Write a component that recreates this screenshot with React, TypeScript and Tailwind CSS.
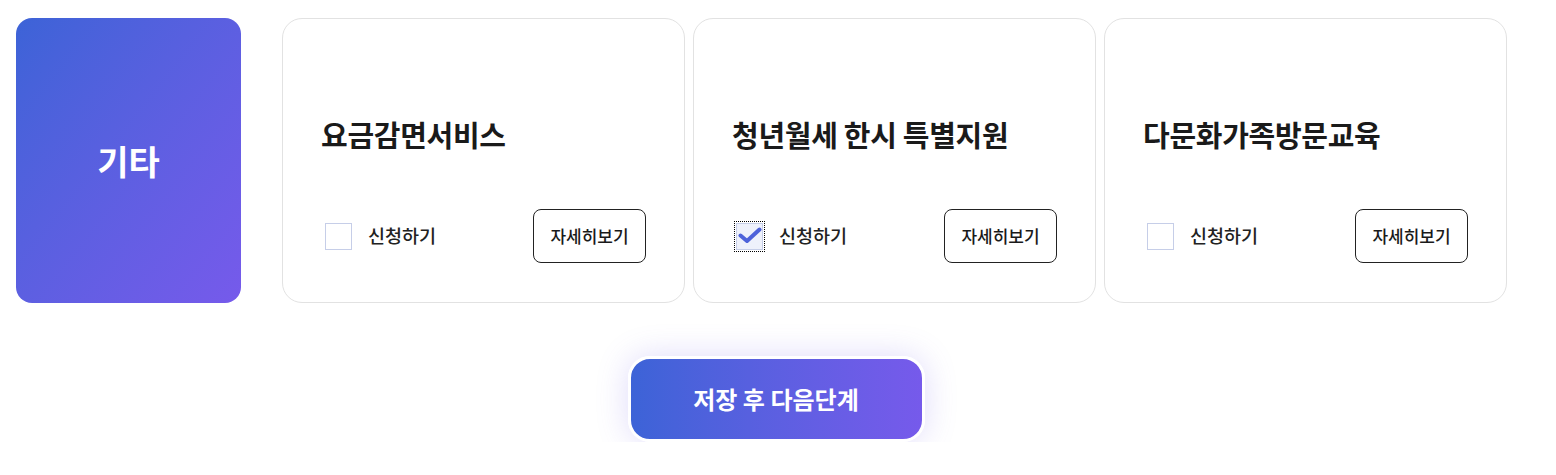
import { useState } from 'react';

const services = [
	{ title: '요금감면서비스', checked: false },
	{ title: '청년월세 한시 특별지원', checked: true },
	{ title: '다문화가족방문교육', checked: false },
];

function ServiceCard({ title, defaultChecked }: { title: string; defaultChecked: boolean }) {
	const [checked, setChecked] = useState(defaultChecked);

	return (
		<div className="w-[403px] h-[285px] rounded-[20px] border border-[#e2e2e2] bg-white px-[38px] pt-[96px]">
			<h3 className="text-[29px] leading-[38px] font-bold text-[#1a1a1a] tracking-[-0.3px]">{title}</h3>
			<div className="mt-[56px] flex h-[54px] items-center justify-between">
				<label className="flex items-center cursor-pointer">
					<span
						className={
							checked
								? 'ml-[4px] flex h-[27px] w-[27px] items-center justify-center border border-[#c6cee8] bg-[#eef1fb] outline-1 outline-dotted outline-black outline-offset-[1px]'
								: 'ml-[4px] flex h-[27px] w-[27px] items-center justify-center border border-[#c6cee8] bg-white'
						}
						onClick={() => setChecked(!checked)}
					>
						{checked && (
							<svg width="24" height="18" viewBox="0 0 24 18" fill="none">
								<path d="M2.5 8.5 L9 14 L21.5 2.5" stroke="#4d62da" strokeWidth="4" strokeLinecap="round" strokeLinejoin="round" />
							</svg>
						)}
					</span>
					<span className="ml-[16px] text-[18.5px] font-medium text-[#222]">신청하기</span>
				</label>
				<button className="h-[54px] w-[113px] rounded-[8px] border border-[#222] bg-white text-[17px] font-medium text-[#1a1a1a]">
					자세히보기
				</button>
			</div>
		</div>
	);
}

export default function App() {
	return (
		<div
			className="min-h-screen bg-white"
			style={{ fontFamily: '"Noto Sans CJK KR", "Noto Sans", sans-serif' }}
		>
			<div className="overflow-hidden">
				<div className="flex pl-[16px] pt-[18px]">
					<div className="flex h-[285px] w-[225px] items-center justify-center rounded-[16px] bg-gradient-to-br from-[#3c63d7] to-[#765aeb]">
						<span className="text-[34px] font-bold text-white">기타</span>
					</div>
					<div className="ml-[41px] flex gap-[8px]">
						{services.map((s) => (
							<ServiceCard key={s.title} title={s.title} defaultChecked={s.checked} />
						))}
					</div>
				</div>
				<div className="flex justify-center pt-[53px]">
					<button className="mr-[4px] h-[86px] w-[297px] rounded-[22px] border-[3px] border-white bg-gradient-to-r from-[#3c63d7] to-[#765aeb] text-[24px] font-bold text-white shadow-[0_0_32px_rgba(110,90,230,0.22)]">
						저장 후 다음단계
					</button>
				</div>
			</div>
		</div>
	);
}
